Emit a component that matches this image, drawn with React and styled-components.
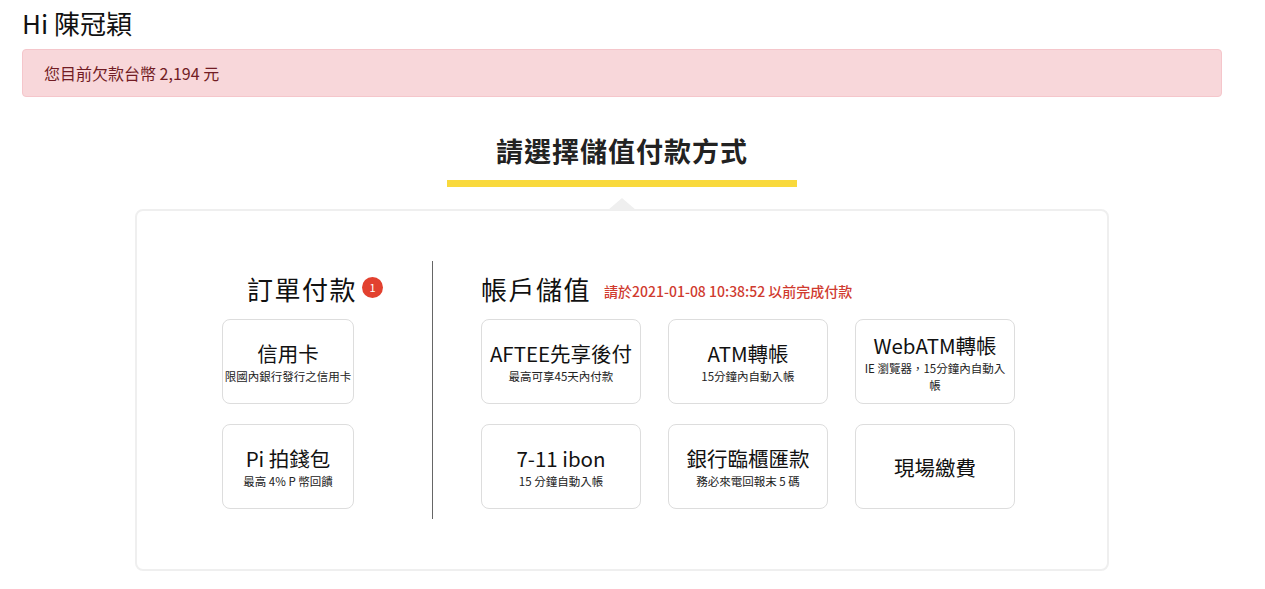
import React from 'react'
import styled, { createGlobalStyle } from 'styled-components'

const GlobalStyle = createGlobalStyle`
  body {
    margin: 0;
    background: #fff;
    font-family: "Noto Sans CJK TC", "Noto Sans", sans-serif;
    color: #222;
  }
`
const Page = styled.div`
  padding: 6px 43px 0 22px;
`
const Greeting = styled.h1`
  margin: 0;
  font-size: 26px;
  font-weight: 400;
  line-height: 34px;
  color: #111;
`
const Alert = styled.div`
  margin-top: 9px;
  height: 48px;
  box-sizing: border-box;
  padding: 0 21px;
  display: flex;
  align-items: center;
  background: #f8d7da;
  border: 1px solid #f5c6cb;
  border-radius: 4px;
  color: #721c24;
  font-size: 16px;
`
const Section = styled.section`
  width: 974px;
  margin: 0 auto;
`
const TitleWrap = styled.div`
  display: flex;
  flex-direction: column;
  align-items: center;
  padding-top: 34px;
`
const Title = styled.h2`
  margin: 0;
  font-size: 27px;
  font-weight: 700;
  line-height: 40px;
  letter-spacing: 1px;
  color: #222;
`
const Underline = styled.div`
  width: 350px;
  height: 7px;
  margin-top: 9px;
  background: #f9d93c;
`
const Panel = styled.div`
  position: relative;
  margin-top: 22px;
  height: 362px;
  box-sizing: border-box;
  border: 2px solid #efefef;
  border-radius: 8px;
  display: flex;
  padding: 50px 0 0 85px;

  &::before {
    content: '';
    position: absolute;
    top: -13px;
    left: 50%;
    margin-left: -14px;
    border-left: 14px solid transparent;
    border-right: 14px solid transparent;
    border-bottom: 12px solid #efefef;
  }
`
const Column = styled.div`
  display: flex;
  flex-direction: column;
  height: 258px;
  box-sizing: border-box;
  ${p => p.$divider && 'width: 211px; flex-shrink: 0; border-right: 1px solid #666; padding-right: 78px;'}
  ${p => p.$right && 'padding-left: 48px;'}
`
const ColHead = styled.div`
  display: flex;
  align-items: center;
  gap: 5px;
  height: 54px;
  margin-bottom: 4px;
  white-space: nowrap;
  ${p => p.$indent && 'padding-left: 25px;'}
`
const ColTitle = styled.h3`
  margin: 0;
  font-size: 26px;
  font-weight: 400;
  letter-spacing: 1.5px;
  color: #111;
`
const Badge = styled.span`
  width: 21px;
  height: 21px;
  flex-shrink: 0;
  border-radius: 50%;
  background: #e2412f;
  color: #fff;
  font-size: 11px;
  display: flex;
  align-items: center;
  justify-content: center;
  margin-top: -2px;
`
const Deadline = styled.span`
  margin-left: 8px;
  margin-top: 6px;
  color: #d03b2f;
  font-size: 14px;
  font-weight: 500;
`
const Grid = styled.div`
  display: grid;
  grid-template-columns: repeat(${p => p.$cols}, ${p => p.$w}px);
  grid-auto-rows: 85px;
  column-gap: 27px;
  row-gap: 20px;
`
const Method = styled.div`
  border: 1px solid #ddd;
  border-radius: 8px;
  display: flex;
  flex-direction: column;
  align-items: center;
  justify-content: center;
  text-align: center;
  background: #fff;
`
const MethodName = styled.div`
  font-size: 20.5px;
  line-height: 30px;
  color: #111;
`
const MethodNote = styled.div`
  max-width: 150px;
  font-size: 11.5px;
  line-height: 17px;
  color: #222;
`

const orderMethods = [
  { name: '信用卡', note: '限國內銀行發行之信用卡' },
  { name: 'Pi 拍錢包', note: '最高 4% P 幣回饋' },
]

const topupMethods = [
  { name: 'AFTEE先享後付', note: '最高可享45天內付款' },
  { name: 'ATM轉帳', note: '15分鐘內自動入帳' },
  { name: 'WebATM轉帳', note: 'IE 瀏覽器，15分鐘內自動入帳' },
  { name: '7-11 ibon', note: '15 分鐘自動入帳' },
  { name: '銀行臨櫃匯款', note: '務必來電回報末 5 碼' },
  { name: '現場繳費' },
]

const MethodCard = ({ name, note }) => (
  <Method>
    <MethodName>{name}</MethodName>
    {note && <MethodNote>{note}</MethodNote>}
  </Method>
)

export default function App() {
  return (
    <>
      <GlobalStyle />
      <Page>
        <Greeting>Hi 陳冠穎</Greeting>
        <Alert>您目前欠款台幣 2,194 元</Alert>
        <Section>
          <TitleWrap>
            <Title>請選擇儲值付款方式</Title>
            <Underline />
          </TitleWrap>
          <Panel>
            <Column $divider>
              <ColHead $indent>
                <ColTitle>訂單付款</ColTitle>
                <Badge>1</Badge>
              </ColHead>
              <Grid $cols={1} $w={132}>
                {orderMethods.map(m => <MethodCard key={m.name} {...m} />)}
              </Grid>
            </Column>
            <Column $right>
              <ColHead>
                <ColTitle>帳戶儲值</ColTitle>
                <Deadline>請於2021-01-08 10:38:52 以前完成付款</Deadline>
              </ColHead>
              <Grid $cols={3} $w={160}>
                {topupMethods.map(m => <MethodCard key={m.name} {...m} />)}
              </Grid>
            </Column>
          </Panel>
        </Section>
      </Page>
    </>
  )
}
